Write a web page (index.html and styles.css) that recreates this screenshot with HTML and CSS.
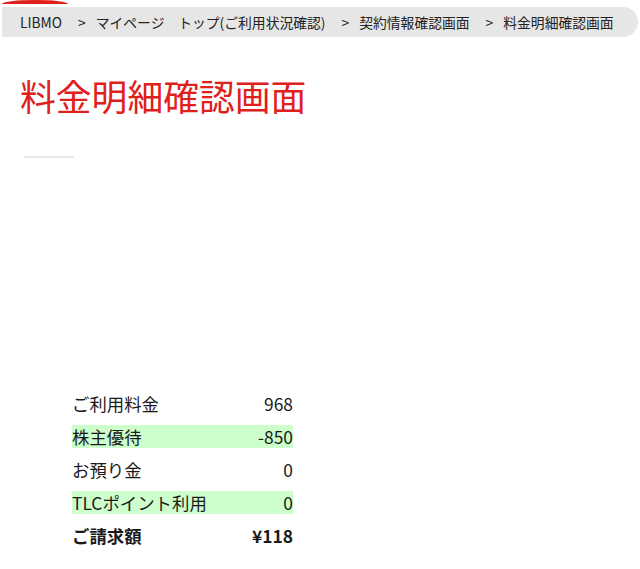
FILE: index.html
```html
<!DOCTYPE html>
<html lang="ja">

<head>
    <meta charset="UTF-8">
    <title>料金明細確認画面</title>
    <link rel="stylesheet" href="styles.css">
</head>

<body>

    <div class="top-accent"></div>
    <div class="breadcrumb">
        <span>LIBMO</span>
        <span class="sep">&gt;</span>
        <span>マイページ　トップ(ご利用状況確認)</span>
        <span class="sep">&gt;</span>
        <span>契約情報確認画面</span>
        <span class="sep">&gt;</span>
        <span>料金明細確認画面</span>
    </div>

    <h1 class="page-title">料金明細確認画面</h1>
    <div class="title-rule"></div>

    <table class="bill">
        <tr>
            <td>ご利用料金</td>
            <td class="num">968</td>
        </tr>
        <tr class="hl">
            <td>株主優待</td>
            <td class="num">-850</td>
        </tr>
        <tr>
            <td>お預り金</td>
            <td class="num">0</td>
        </tr>
        <tr class="hl">
            <td>TLCポイント利用</td>
            <td class="num">0</td>
        </tr>
        <tr class="total">
            <td>ご請求額</td>
            <td class="num">¥118</td>
        </tr>
    </table>

</body>

</html>
```

FILE: styles.css
```css
body {
    margin: 0;
    font-family: 'Noto Sans CJK JP', sans-serif;
    color: #1a1a1a;
    background: #fff;
}

.top-accent {
    width: 66px;
    height: 4px;
    margin-left: 2px;
    background: #e0201b;
    border-radius: 50% 50% 0 0 / 100% 100% 0 0;
}

.breadcrumb {
    display: flex;
    align-items: center;
    gap: 10px;
    height: 30px;
    margin: 3px 2px 0 2px;
    padding-left: 18px;
    background: #e6e6e6;
    border-radius: 0 15px 15px 0;
    font-size: 13.8px;
    line-height: 30px;
    color: #222;
}

.breadcrumb .sep {
    margin-left: 6px;
}

.page-title {
    margin: 36px 0 0 20px;
    font-size: 35.8px;
    font-weight: normal;
    line-height: 44px;
    color: #e0201b;
}

.title-rule {
    width: 50px;
    height: 2px;
    margin: 39px 0 0 24px;
    background: #e8e8e8;
}

.bill {
    width: 221px;
    margin: 224px 0 0 72px;
    border-collapse: separate;
    border-spacing: 0 10px;
    font-size: 17.4px;
}

.bill td {
    height: 23px;
    padding: 0;
    line-height: 23px;
}

.bill .num {
    text-align: right;
}

.bill .hl td {
    background: #ccffcc;
}

.bill .total td {
    font-weight: bold;
}
```
